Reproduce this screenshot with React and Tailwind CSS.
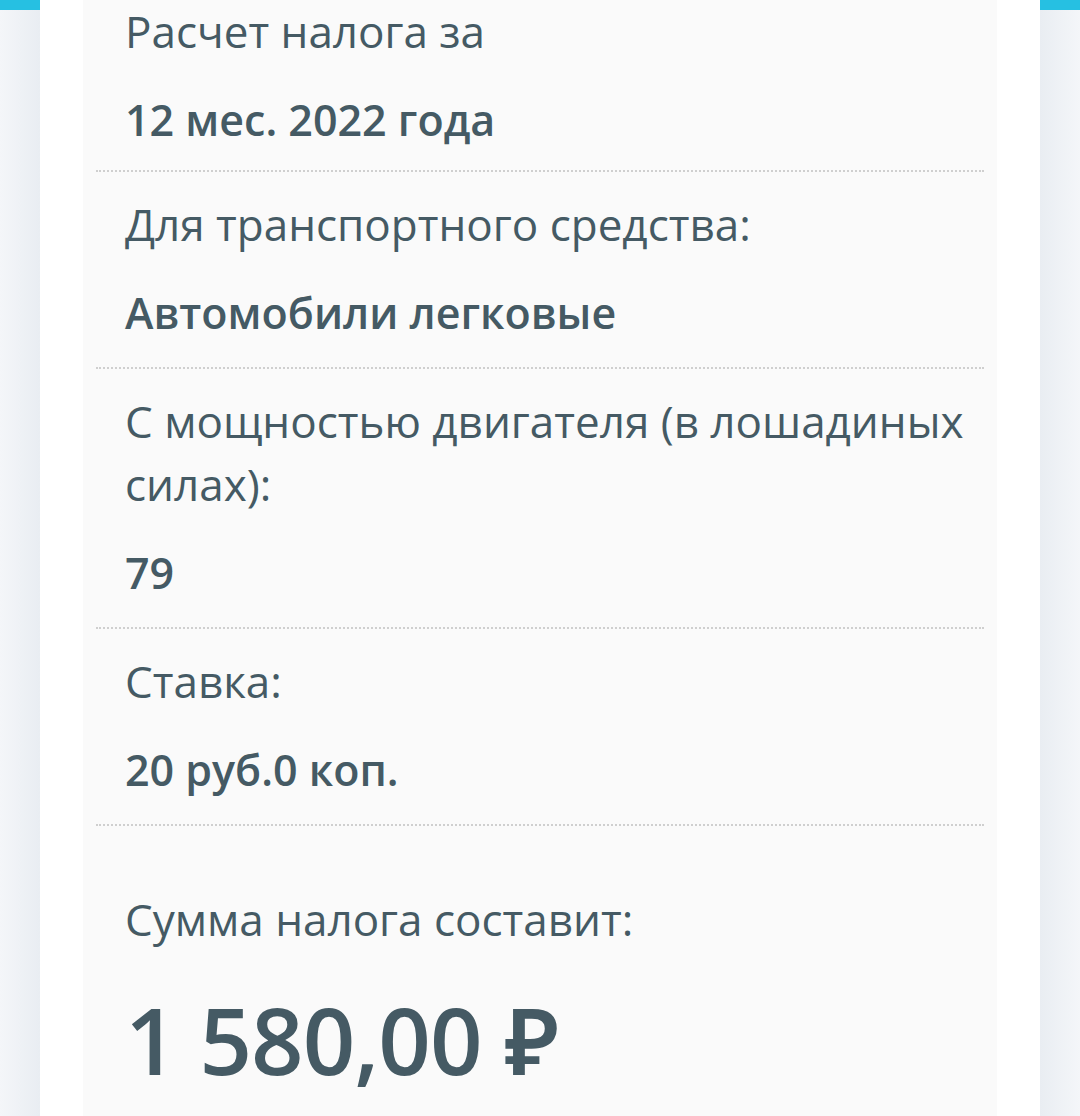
import React from 'react';

const rows = [
  { label: 'Расчет налога за', value: '12 мес. 2022 года' },
  { label: 'Для транспортного средства:', value: 'Автомобили легковые' },
  { label: 'С мощностью двигателя (в лошадиных силах):', value: '79' },
  { label: 'Ставка:', value: '20 руб.0 коп.' },
];

const Row = ({ label, value, first }) => (
  <div className={first ? 'pl-[29px] pr-[10px] pt-0 pb-[19px]' : 'pl-[29px] pr-[10px] pt-[21px] pb-[23px]'}>
    <div className="text-[44px] leading-[63px] font-normal">{label}</div>
    <div className="mt-[25px] text-[43px] leading-[63px] font-semibold">{value}</div>
  </div>
);

const App = () => {
  return (
    <div
      className="flex w-full h-[1116px] overflow-hidden text-[#455a64]"
      style={{ fontFamily: '"Open Sans", "Noto Sans", sans-serif' }}
    >
      {/* left strip */}
      <div className="w-[40px] shrink-0 bg-gradient-to-r from-[#f4f6f9] to-[#e9edf2]">
        <div className="h-[10px] bg-[#26c0e2]" />
      </div>

      {/* card */}
      <div className="flex-1 bg-white px-[43px]">
        <div className="bg-[#fafafa] h-full px-[13px]">
          {rows.map((r, i) => (
            <div key={i}>
              <Row label={r.label} value={r.value} first={i === 0} />
              <div className="border-t-2 border-dotted border-[#cfcfcf]" />
            </div>
          ))}

          {/* total */}
          <div className="pl-[29px] pt-[62px]">
            <div className="text-[44px] leading-[63px]">Сумма налога составит:</div>
            <div className="mt-[35px] text-[92px] leading-[108px] font-semibold tracking-[-1px]">
              1 580,00 ₽
            </div>
          </div>
        </div>
      </div>

      {/* right strip */}
      <div className="w-[40px] shrink-0 bg-gradient-to-r from-[#e9edf2] to-[#f4f6f9]">
        <div className="h-[10px] bg-[#26c0e2]" />
      </div>
    </div>
  );
};

export default App;
